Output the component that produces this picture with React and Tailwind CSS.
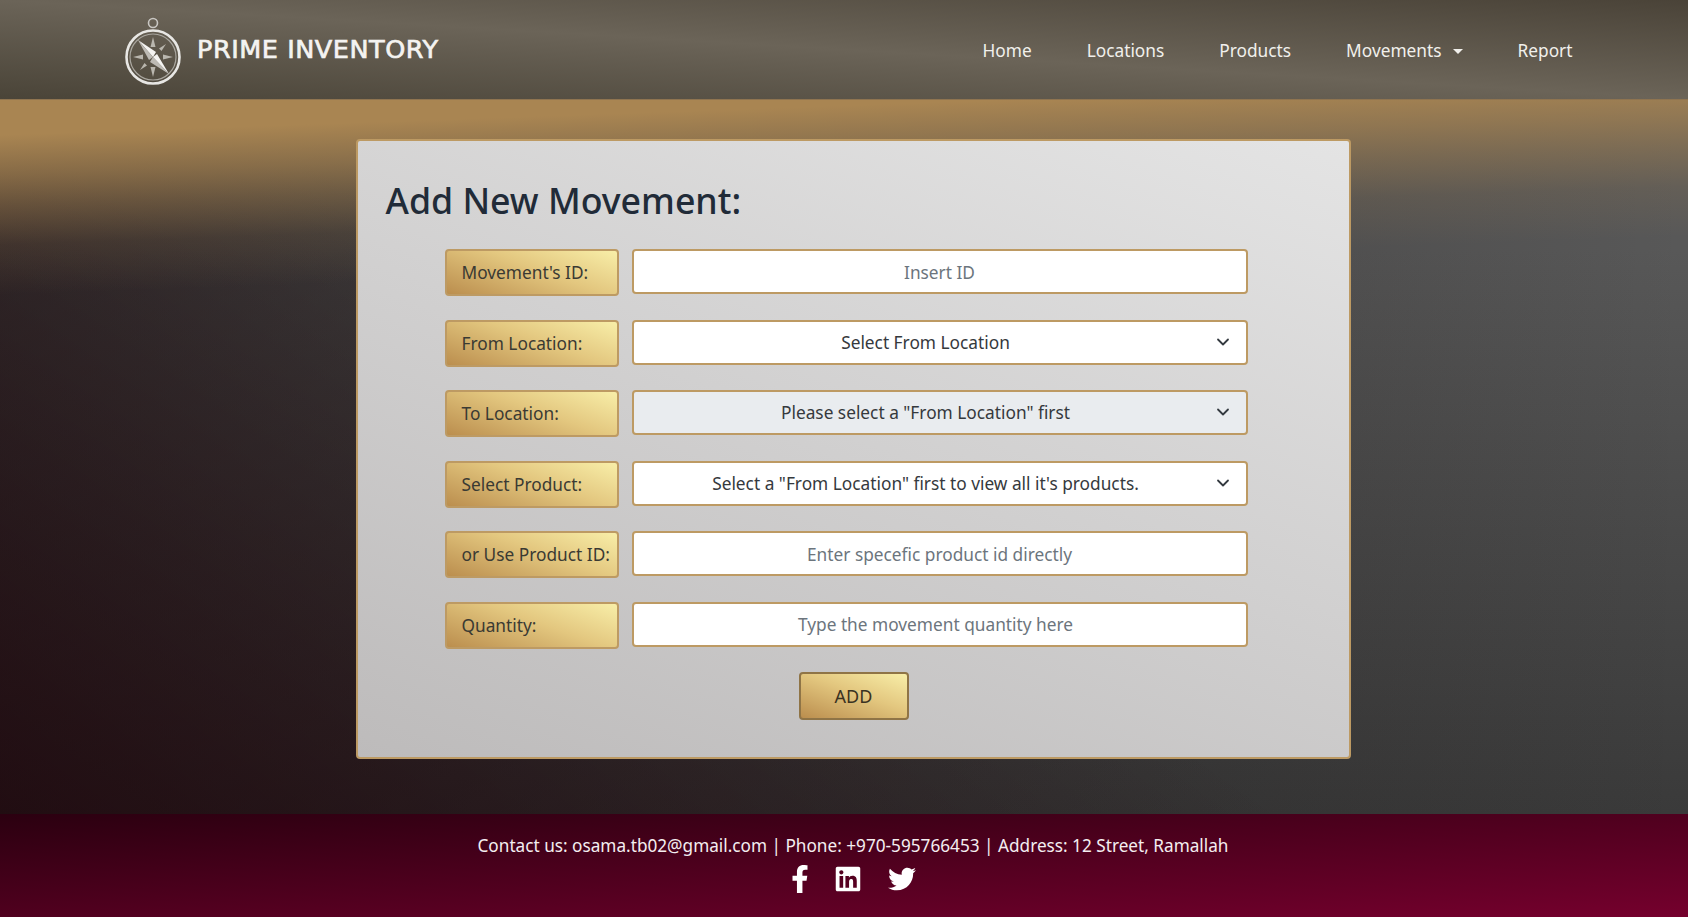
import React from 'react';
import { FaFacebookF, FaLinkedin, FaTwitter } from 'react-icons/fa';

const navLinks = ['Home', 'Locations', 'Products', 'Movements', 'Report'];

const Compass = () => (
    <svg className="mt-[4px] ml-[1px]" width="60" height="72" viewBox="0 0 60 72" fill="none">
        <circle cx="30" cy="7" r="4.5" stroke="#c9c7c3" strokeWidth="1.6" />
        <circle cx="30" cy="41" r="26.5" stroke="#e8e7e4" strokeWidth="2.6" />
        <circle cx="30" cy="41" r="23" stroke="#a9a69f" strokeWidth="1.2" />
        <g fill="#b9b6ae">
            <polygon points="30,21 32.5,31 27.5,31" />
            <polygon points="30,61 32.5,51 27.5,51" />
            <polygon points="10,41 20,38.5 20,43.5" />
            <polygon points="50,41 40,38.5 40,43.5" />
            <polygon points="43,28 38.5,35 36,32.5" />
            <polygon points="17,54 21.5,47 24,49.5" />
        </g>
        <polygon points="15,24 33,36 30,41" fill="#f4f3f1" />
        <polygon points="15,24 30,41 26,44" fill="#bdbab4" />
        <polygon points="46,58 27,46 30,41" fill="#bdbab4" />
        <polygon points="46,58 30,41 34,38" fill="#f4f3f1" />
    </svg>
);

const Label = ({ children }) => (
    <div className="w-[174px] h-[47px] shrink-0 flex items-center pl-[15px] pt-[1px] rounded-[4px] border-2 border-[#bd9a63] bg-[linear-gradient(20deg,#bb8e4e,#e3c77f_55%,#f8eea8)] text-[17.3px] text-[#3a3a33] whitespace-nowrap">
        {children}
    </div>
);

const TextRow = ({ label, placeholder, inputClass = '' }) => (
    <div className="flex gap-[13px]">
        <Label>{label}</Label>
        <input
            type="text"
            placeholder={placeholder}
            className={`w-[616px] h-[45px] pt-[1px] rounded-[4px] border-2 border-[#bd9a63] bg-white text-center text-[17.3px] text-[#495057] placeholder:text-[#6c757d] outline-none ${inputClass}`}
        />
    </div>
);

const SelectRow = ({ label, text, disabled }) => (
    <div className="flex gap-[13px]">
        <Label>{label}</Label>
        <div className="relative w-[616px] h-[45px]">
            <select
                disabled={disabled}
                className={`w-full h-full appearance-none rounded-[4px] border-2 border-[#bd9a63] pt-[1px] pr-[28px] text-center text-[17.3px] text-[#35393d] outline-none ${disabled ? 'bg-[#e9ecef]' : 'bg-white'}`}
            >
                <option>{text}</option>
            </select>
            <svg className="absolute right-[17px] top-[14px]" width="16" height="16" viewBox="0 0 16 16" fill="none">
                <path d="M3 5.5l5 5 5-5" stroke="#343a40" strokeWidth="1.8" strokeLinecap="round" strokeLinejoin="round" />
            </svg>
        </div>
    </div>
);

const App = () => {
    return (
        <div className="min-h-screen flex flex-col font-['Noto_Sans',sans-serif] bg-[linear-gradient(178deg,#a98552_100px,#a98552_135px,rgba(169,133,82,0.7)_175px,rgba(169,133,82,0.45)_205px,rgba(169,133,82,0.15)_245px,rgba(169,133,82,0)_295px),linear-gradient(35deg,rgba(31,0,8,0.7)_0%,rgba(31,0,8,0)_48%),linear-gradient(90deg,rgba(20,15,15,0.55)_0%,rgba(20,15,15,0)_100%),linear-gradient(180deg,#585858_250px,#3a3a3a_813px)]">
            <header className="h-[100px] flex items-center justify-between pl-[122px] pr-[88px] bg-[linear-gradient(to_top_right,#4a4438,#6b6458_50%,#4a4338)] border-b border-[#8f7450]">
                <div className="flex items-center gap-[14px]">
                    <Compass />
                    <span className="font-['DejaVu_Sans',sans-serif] text-[25.5px] tracking-[0.55px] [-webkit-text-stroke:0.7px_#f4f3f1] text-[#f4f3f1]">PRIME INVENTORY</span>
                </div>
                <nav className="flex items-center pt-[3px]">
                    {navLinks.map((link) => (
                        <a key={link} href="#" className="px-[27.5px] text-[17.3px] text-[#f1f0ec] flex items-center">
                            {link}
                            {link === 'Movements' && <span className="ml-[11px] w-0 h-0 border-x-[5.5px] border-x-transparent border-t-[5.5px] border-t-[#f1f0ec]"></span>}
                        </a>
                    ))}
                </nav>
            </header>

            <main className="flex-1 flex justify-center pl-[18px] pt-[39px]">
                <div className="w-[995px] h-[620px] rounded-[4px] border-2 border-[#bd9a63] bg-[linear-gradient(200deg,#e4e4e4,#bdbbbb)] pl-[87px] pt-[31px]">
                    <h2 className="-ml-[59px] text-[35.7px] leading-[56px] font-medium text-[#212b38] mb-[21px]">Add New Movement:</h2>
                    <div className="flex flex-col gap-[23.5px]">
                        <TextRow label="Movement's ID:" placeholder="Insert ID" />
                        <SelectRow label="From Location:" text="Select From Location" />
                        <SelectRow label="To Location:" text={'Please select a "From Location" first'} disabled />
                        <SelectRow label="Select Product:" text={'Select a "From Location" first to view all it\'s products.'} />
                        <TextRow label="or Use Product ID:" placeholder="Enter specefic product id directly" />
                        <TextRow label="Quantity:" placeholder="Type the movement quantity here" inputClass="pr-[8px]" />
                    </div>
                    <button className="block mt-[23px] ml-[354px] w-[110px] h-[48px] pt-[1px] rounded-[4px] border-2 border-[#8f7446] bg-[linear-gradient(20deg,#bb8e4e,#e3c77f_55%,#f8eea8)] text-[18px] text-[#3a3222]">ADD</button>
                </div>
            </main>

            <footer className="h-[103px] flex flex-col items-center pl-[18px] pt-[20px] bg-[linear-gradient(to_bottom_right,#2b0010,#75002d)] text-[#f4eef0]">
                <p className="text-[17.2px] leading-[24px]">Contact us: osama.tb02@gmail.com | Phone: +970-595766453 | Address: 12 Street, Ramallah</p>
                <div className="flex items-center mt-[7px] pr-[4px] text-[28px] text-white">
                    <FaFacebookF className="mr-[20px]" />
                    <FaLinkedin className="mr-[26px]" />
                    <FaTwitter />
                </div>
            </footer>
        </div>
    );
};

export default App;
